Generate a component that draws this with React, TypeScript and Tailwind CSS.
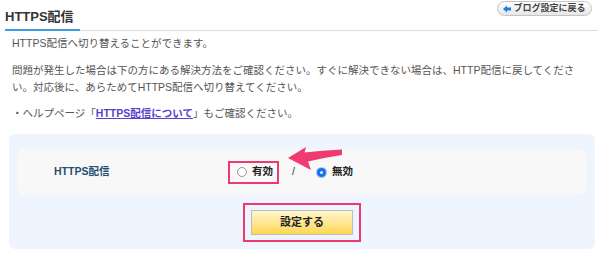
const font = { fontFamily: '"Liberation Sans", "Noto Sans CJK JP", sans-serif' };

function Radio({ checked }: { checked?: boolean }) {
  if (checked) {
    return (
      <span className="flex h-[11px] w-[11px] items-center justify-center rounded-full bg-[#9cc8f5]">
        <span className="flex h-[9px] w-[9px] items-center justify-center rounded-full bg-[#1a6ff0]">
          <span className="h-[3px] w-[3px] rounded-full bg-[#e8f1ff]" />
        </span>
      </span>
    );
  }
  return <span className="h-[10px] w-[10px] rounded-full border border-[#9a9a9a] bg-white" />;
}

export default function App() {
  return (
    <div className="relative h-[259px] w-[600px] overflow-hidden bg-white text-[#555]" style={font}>
      {/* Header */}
      <div className="flex h-[29px] items-start justify-between">
        <h1 className="pl-[5px] pt-[9px] text-[13px] font-bold leading-[16px] text-[#333]">HTTPS配信</h1>
        <button className="mr-[8px] mt-[1px] flex h-[15px] w-[95px] items-center justify-center gap-[2px] rounded-full border border-[#c4c4c4] bg-gradient-to-b from-white to-[#e6e6e6] text-[9px] font-bold leading-none text-[#444]">
          <svg width="8" height="8" viewBox="0 0 8 8">
            <path d="M0 4 L4 0.5 L4 2.5 L8 2.5 L8 5.5 L4 5.5 L4 7.5 Z" fill="#1e7fd8" />
          </svg>
          ブログ設定に戻る
        </button>
      </div>
      <div className="ml-[5px] mr-[2px] flex h-[2px] items-end">
        <span className="h-[2px] w-[75px] bg-[#3ea0e0]" />
        <span className="h-px flex-1 bg-[#dcdcdc]" />
      </div>

      {/* Description */}
      <div className="w-[582px] pl-[12px] text-[10.5px] leading-[17px]">
        <p className="mt-[3.5px]">HTTPS配信へ切り替えることができます。</p>
        <p className="mt-[10px]">
          問題が発生した場合は下の方にある解決方法をご確認ください。すぐに解決できない場合は、HTTP配信に戻してください。対応後に、あらためてHTTPS配信へ切り替えてください。
        </p>
        <p className="mt-[9px]">
          ・ヘルプページ「<a className="font-bold text-[#5b3fcf] underline">HTTPS配信について</a>」もご確認ください。
        </p>
      </div>

      {/* Form box */}
      <div className="ml-[9px] mt-[12.5px] h-[115px] w-[586px] rounded-[6px] bg-[#eef5fe] px-[8px] pt-[15px]">
        <div className="flex h-[46px] items-center rounded-[6px] bg-[#f8f8f8]">
          <div className="w-[211px] pl-[37px] text-[10.5px] font-bold text-[#1f4f72]">HTTPS配信</div>
          <div className="flex h-[23px] w-[51px] items-center gap-[5px] border-2 border-[#ec3a6e] pl-[7px] text-[10.5px] font-bold text-[#222]">
            <Radio />
            有効
          </div>
          <span className="ml-[13px] text-[10.5px] text-[#333]">/</span>
          <div className="ml-[21px] flex items-center gap-[5px] text-[10.5px] font-bold text-[#222]">
            <Radio checked />
            無効
          </div>
        </div>
        <div className="mt-[8px] flex justify-center">
          <div className="flex h-[39px] w-[118px] items-center border-2 border-[#ec3a6e] pl-[6px]">
            <button className="h-[25px] w-[102px] border border-[#bdbdbd] bg-gradient-to-b from-[#fff6cc] to-[#ffd64a] text-[11px] font-bold text-[#222]">
              設定する
            </button>
          </div>
        </div>
      </div>

      {/* Annotation arrow */}
      <svg className="absolute left-0 top-0" width="600" height="259" viewBox="0 0 600 259">
        <path
          d="M288 158 L306 147 L304.5 152.5 Q322 150.5 342 149.5 L342 155 Q325 157.5 308 161.5 L311 170 Z"
          fill="#f03a71"
        />
      </svg>
    </div>
  );
}
